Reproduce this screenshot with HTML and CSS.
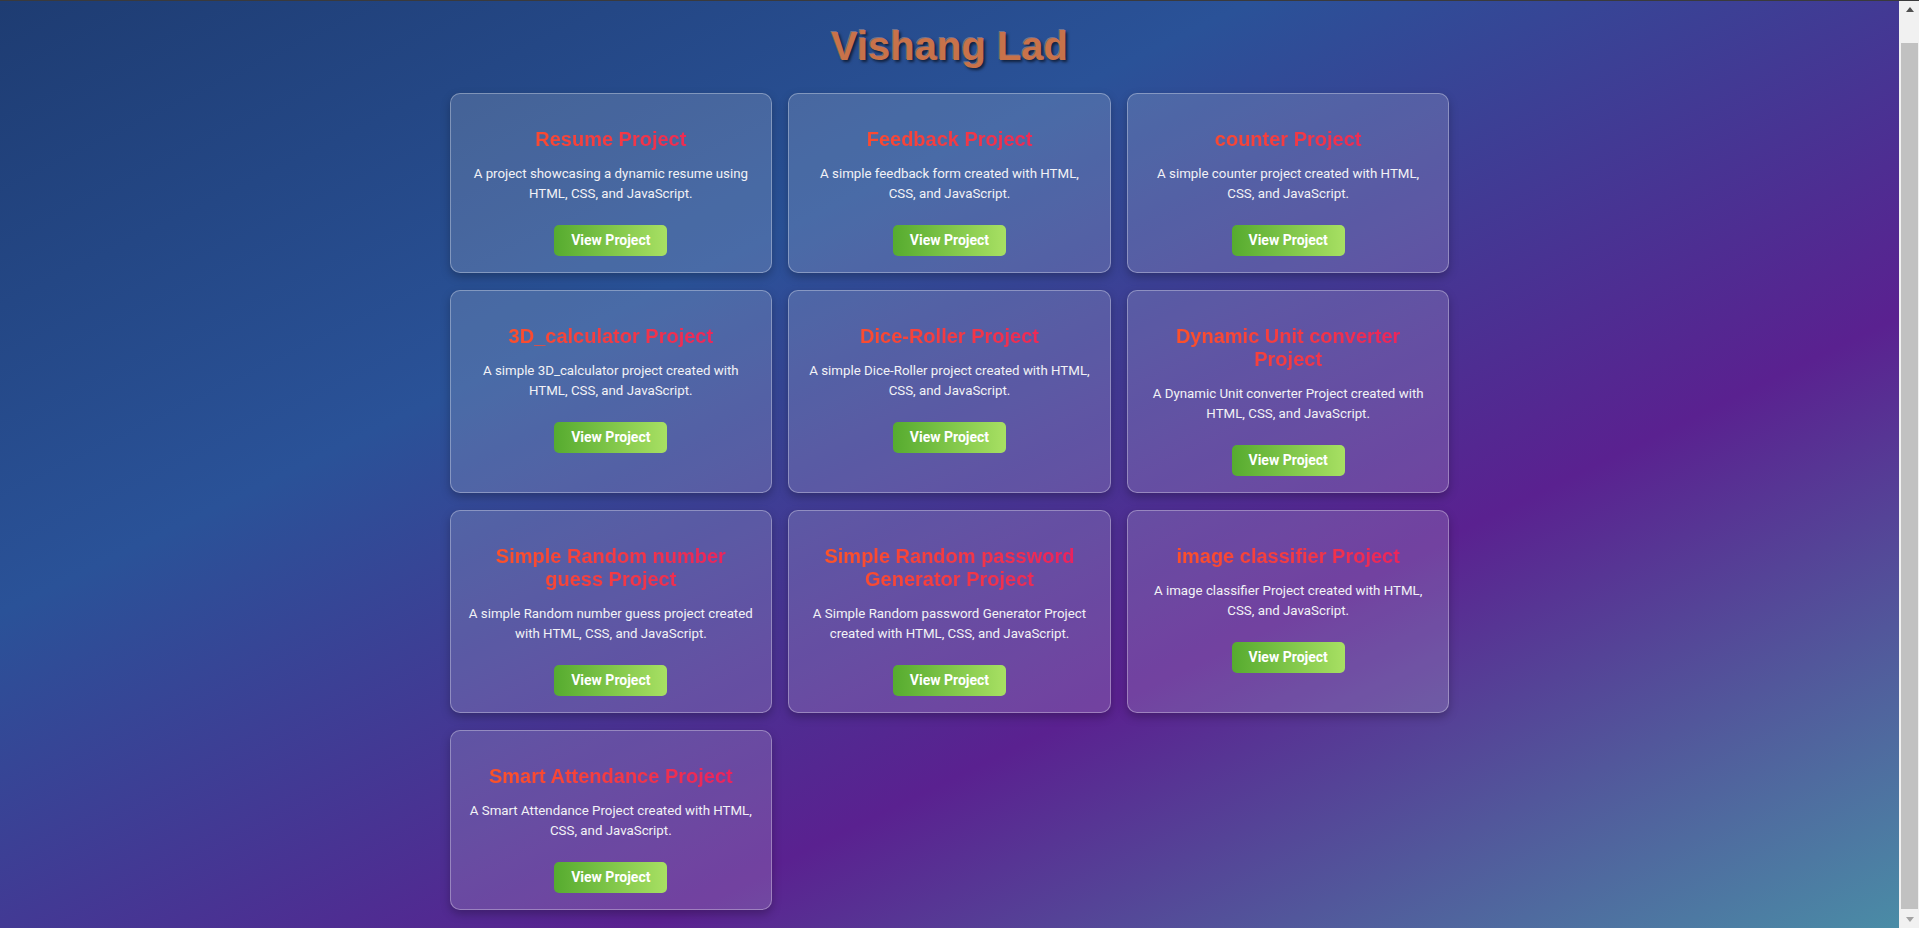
FILE: index.html
```html
<!DOCTYPE html>
<html lang="en">
<head>
<meta charset="utf-8">
<title>Vishang Lad – Projects</title>
<link rel="stylesheet" href="styles.css">
</head>
<body>
<div class="window">
  <main class="page">
    <h1 class="site-title">Vishang Lad</h1>
    <section class="grid">
      <article class="card">
        <h2 class="card-title">Resume Project</h2>
        <p class="card-text">A project showcasing a dynamic resume using<br>HTML, CSS, and JavaScript.</p>
        <a class="btn" href="#">View Project</a>
      </article>
      <article class="card">
        <h2 class="card-title">Feedback Project</h2>
        <p class="card-text">A simple feedback form created with HTML,<br>CSS, and JavaScript.</p>
        <a class="btn" href="#">View Project</a>
      </article>
      <article class="card">
        <h2 class="card-title">counter Project</h2>
        <p class="card-text">A simple counter project created with HTML,<br>CSS, and JavaScript.</p>
        <a class="btn" href="#">View Project</a>
      </article>
      <article class="card">
        <h2 class="card-title">3D_calculator Project</h2>
        <p class="card-text">A simple 3D_calculator project created with<br>HTML, CSS, and JavaScript.</p>
        <a class="btn" href="#">View Project</a>
      </article>
      <article class="card">
        <h2 class="card-title">Dice-Roller Project</h2>
        <p class="card-text">A simple Dice-Roller project created with HTML,<br>CSS, and JavaScript.</p>
        <a class="btn" href="#">View Project</a>
      </article>
      <article class="card">
        <h2 class="card-title">Dynamic Unit converter<br>Project</h2>
        <p class="card-text">A Dynamic Unit converter Project created with<br>HTML, CSS, and JavaScript.</p>
        <a class="btn" href="#">View Project</a>
      </article>
      <article class="card">
        <h2 class="card-title">Simple Random number<br>guess Project</h2>
        <p class="card-text">A simple Random number guess project created<br>with HTML, CSS, and JavaScript.</p>
        <a class="btn" href="#">View Project</a>
      </article>
      <article class="card">
        <h2 class="card-title">Simple Random password<br>Generator Project</h2>
        <p class="card-text">A Simple Random password Generator Project<br>created with HTML, CSS, and JavaScript.</p>
        <a class="btn" href="#">View Project</a>
      </article>
      <article class="card">
        <h2 class="card-title">image classifier Project</h2>
        <p class="card-text">A image classifier Project created with HTML,<br>CSS, and JavaScript.</p>
        <a class="btn" href="#">View Project</a>
      </article>
      <article class="card">
        <h2 class="card-title">Smart Attendance Project</h2>
        <p class="card-text">A Smart Attendance Project created with HTML,<br>CSS, and JavaScript.</p>
        <a class="btn" href="#">View Project</a>
      </article>
    </section>
  </main>
  <div class="scrollbar" aria-hidden="true">
    <div class="sb-btn sb-up"><span class="tri tri-up"></span></div>
    <div class="sb-track"><div class="sb-thumb"></div></div>
    <div class="sb-btn sb-down"><span class="tri tri-down"></span></div>
  </div>
</div>
</body>
</html>
```
FILE: styles.css
```css
html, body {
  margin: 0;
  padding: 0;
  height: 100%;
  overflow: hidden;
}

body {
  font-family: Roboto, "Liberation Sans", Arial, sans-serif;
  background: #1e3c72;
}

.window {
  display: flex;
  height: 928px;
  box-sizing: border-box;
  border-top: 1px solid #3a3a3c;
}

.page {
  flex: 1;
  min-width: 0;
  overflow: hidden;
  padding-top: 22px;
  background: linear-gradient(to bottom right, #1e3c72 0%, #2a5298 33%, #5a2190 67%, #4a8ca6 100%);
}

.site-title {
  margin: 0;
  text-align: center;
  font-family: "Liberation Sans", Arial, sans-serif;
  font-weight: 700;
  font-size: 40px;
  line-height: 46px;
  color: #c8724a;
  text-shadow: -1px -1px 0 rgba(255, 190, 150, 0.35), 2px 2px 3px rgba(0, 0, 0, 0.6);
}

.grid {
  width: 1000px;
  margin: 24px auto 0;
  display: grid;
  grid-template-columns: repeat(3, 1fr);
  column-gap: 16px;
  row-gap: 17px;
}

.card {
  display: flex;
  flex-direction: column;
  align-items: center;
  text-align: center;
  padding: 34px 16px 16px;
  background: rgba(255, 255, 255, 0.15);
  border: 1px solid rgba(255, 255, 255, 0.32);
  border-radius: 10px;
  box-shadow: 0 4px 10px rgba(0, 0, 0, 0.25);
}

.card-title {
  align-self: stretch;
  margin: 0 0 13px;
  font-family: "Liberation Sans", Arial, sans-serif;
  font-weight: 700;
  font-size: 20px;
  line-height: 23px;
  background: linear-gradient(to right, #ff5722, #e91e63);
  -webkit-background-clip: text;
  background-clip: text;
  color: transparent;
}

.card-text {
  align-self: stretch;
  margin: 0 0 21px;
  font-size: 13.3px;
  line-height: 20px;
  color: #f2f2f6;
  white-space: nowrap;
}

.btn {
  display: block;
  height: 31px;
  line-height: 31px;
  padding: 0 17px;
  border-radius: 5px;
  background: linear-gradient(to right, #56ab2f, #a8e063);
  color: #fff;
  font-weight: 700;
  font-size: 14px;
  text-decoration: none;
}

.scrollbar {
  width: 20px;
  flex: none;
  display: flex;
  flex-direction: column;
  background: #f1f1f1;
}

.sb-btn {
  height: 17px;
  flex: none;
  display: flex;
  align-items: center;
  justify-content: center;
  padding-left: 2px;
}

.sb-track {
  flex: 1;
  padding: 25px 1px 0 2px;
}

.sb-thumb {
  height: 866px;
  background: #c1c1c1;
}

.tri {
  width: 0;
  height: 0;
  border-left: 4.5px solid transparent;
  border-right: 4.5px solid transparent;
}

.tri-up {
  border-bottom: 5px solid #505050;
}

.tri-down {
  border-top: 5px solid #a3a3a3;
}
```
